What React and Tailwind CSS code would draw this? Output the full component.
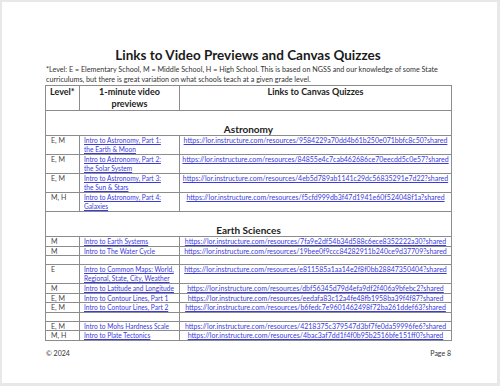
const BASE = "https://lor.instructure.com/resources/";

const astronomy = [
  { level: "E, M", title: ["Intro to Astronomy, Part 1:", "the Earth & Moon"], id: "9584229a70dd4b61b250e071bbfc8c50" },
  { level: "E, M", title: ["Intro to Astronomy, Part 2:", "the Solar System"], id: "84855e4c7cab462686ce70eecdd5c0e57" },
  { level: "E, M", title: ["Intro to Astronomy, Part 3:", "the Sun & Stars"], id: "4eb5d789ab1141c29dc56835291e7d22" },
  { level: "M, H", title: ["Intro to Astronomy, Part 4:", "Galaxies"], id: "f5cfd999db3f47d1941e60f524048f1a" },
];

const earth = [
  { level: "M", title: ["Intro to Earth Systems"], id: "7fa9e2df54b34d588c6ece8352222a30" },
  { level: "M", title: ["Intro to The Water Cycle"], id: "19bee0f9ccc84282911b240ce9d37709" },
  null,
  { level: "E", title: ["Intro to Common Maps: World,", "Regional, State, City, Weather"], id: "e811585a1aa14e2f8f0bb28847350404" },
  { level: "M", title: ["Intro to Latitude and Longitude"], id: "dbf56345d79d4efa9df2f406a9bfebc2" },
  { level: "E, M", title: ["Intro to Contour Lines, Part 1"], id: "eedafa83c12a4fe48fb1958ba39f4f87" },
  { level: "E, M", title: ["Intro to Contour Lines, Part 2"], id: "b6fedc7e9601462498f72ba261ddef63" },
  null,
  { level: "E, M", title: ["Intro to Mohs Hardness Scale"], id: "4218375c379547d3bf7fe0da59996fe6" },
  { level: "M, H", title: ["Intro to Plate Tectonics"], id: "4bac3af7dd1f4f0b95b2516bfe151ff0" },
];

const cell = "border border-[#8c8c8c] align-top p-0 whitespace-nowrap overflow-hidden";

function Row({ row }) {
  if (!row) {
    return (
      <tr className="h-[9px]">
        <td className={cell}></td>
        <td className={cell}></td>
        <td className={cell}></td>
      </tr>
    );
  }
  // single-line rows sit a bit tighter than the two-line ones
  const lh = row.title.length > 1 ? "leading-[9px]" : "leading-[8.5px]";
  return (
    <tr className={lh}>
      <td className={`${cell} pl-[5px] text-[#444]`}>{row.level}</td>
      <td className={`${cell} pl-[4px] text-[6.6px]`}>
        <a href="#" className="text-[#3b3bdc] underline">
          {row.title.map((t, i) => (
            <span key={i} className="block">
              {t}
            </span>
          ))}
        </a>
      </td>
      <td className={`${cell} text-center`}>
        <a href="#" className="text-[#3b3bdc] underline">
          {BASE + row.id + "?shared"}
        </a>
      </td>
    </tr>
  );
}

function Section({ name }) {
  return (
    <tr>
      <td colSpan={3} className="border border-[#8c8c8c] p-0 pt-[12px] text-center text-[10px] font-bold leading-[12px] text-[#222]">
        {name}
      </td>
    </tr>
  );
}

export default function App() {
  return (
    <div className="h-[386px] w-[500px] bg-[#e8e8e8] pt-[2px] pl-[2px] [font-family:Lato,'Open_Sans',sans-serif]">
      <div className="h-[381px] w-[495px] bg-white pl-[43px] pt-[43px]">
        <h1 className="w-[406px] text-center text-[13.5px] font-bold leading-[20px] text-[#1a1a1a]">
          Links to Video Previews and Canvas Quizzes
        </h1>
        <p className="pl-[1px] text-[7.2px] leading-[10px] text-[#333]">
          *Level: E = Elementary School, M = Middle School, H = High School. This is based on NGSS and our knowledge of some State
          <br />
          curriculums, but there is great variation on what schools teach at a given grade level.
        </p>
        <table className="w-[406px] table-fixed border-collapse text-[7px]">
          <colgroup>
            <col className="w-[34px]" />
            <col className="w-[100px]" />
            <col className="w-[272px]" />
          </colgroup>
          <thead>
            <tr className="h-[25px]">
              <th className="border border-[#8c8c8c] p-0 pl-[4px] text-left align-top text-[9px] font-bold leading-[12px] text-[#222]">
                Level*
              </th>
              <th className="border border-[#8c8c8c] p-0 text-center align-top text-[9px] font-bold leading-[12px] text-[#222]">
                1-minute video
                <br />
                previews
              </th>
              <th className="border border-[#8c8c8c] p-0 text-center align-top text-[9px] font-bold leading-[12px] text-[#222]">
                Links to Canvas Quizzes
              </th>
            </tr>
          </thead>
          <tbody>
            <Section name="Astronomy" />
            {astronomy.map((r, i) => (
              <Row key={i} row={r} />
            ))}
            <Section name="Earth Sciences" />
            {earth.map((r, i) => (
              <Row key={i} row={r} />
            ))}
          </tbody>
        </table>
        <div className="mt-[7px] flex w-[406px] justify-between pl-[1px] text-[7px] leading-[10px] text-[#333]">
          <span>© 2024</span>
          <span>Page 8</span>
        </div>
      </div>
    </div>
  );
}
